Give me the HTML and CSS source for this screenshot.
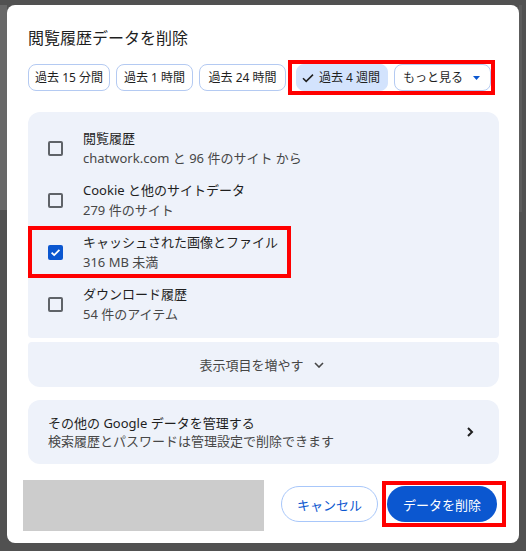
FILE: index.html
```html
<!DOCTYPE html>
<html lang="ja">
<head>
<meta charset="utf-8">
<title>閲覧履歴データを削除</title>
<link rel="stylesheet" href="styles.css">
</head>
<body>
<div class="dialog">
  <h1 class="title">閲覧履歴データを削除</h1>
  <div class="chips">
    <span class="chip chip-w1">過去 15 分間</span>
    <span class="chip chip-w2">過去 1 時間</span>
    <span class="chip chip-w3">過去 24 時間</span>
    <span class="mark-group">
      <span class="chip chip-selected"><svg class="chip-check" width="12" height="10" viewBox="0 0 12 10"><path d="M1 5.2 L4.2 8.4 L11 1.6" fill="none" stroke="#1f1f1f" stroke-width="1.5"/></svg>過去 4 週間</span>
      <span class="chip chip-more">もっと見る<svg class="chip-caret" width="7" height="4" viewBox="0 0 7 4"><path d="M0 0 L7 0 L3.5 4 Z" fill="#0b57d0"/></svg></span>
    </span>
  </div>

  <div class="card card-list">
    <div class="row">
      <span class="box"></span>
      <div class="row-text">
        <div class="label">閲覧履歴</div>
        <div class="sub">chatwork.com と 96 件のサイト から</div>
      </div>
    </div>
    <div class="row">
      <span class="box"></span>
      <div class="row-text">
        <div class="label">Cookie と他のサイトデータ</div>
        <div class="sub">279 件のサイト</div>
      </div>
    </div>
    <div class="row row-marked">
      <span class="box box-checked"><svg width="15" height="15" viewBox="0 0 15 15"><path d="M3.6 7.6 L6.2 10.1 L11.4 4.9" fill="none" stroke="#fff" stroke-width="1.8"/></svg></span>
      <div class="row-text">
        <div class="label">キャッシュされた画像とファイル</div>
        <div class="sub">316 MB 未満</div>
      </div>
    </div>
    <div class="row">
      <span class="box"></span>
      <div class="row-text">
        <div class="label">ダウンロード履歴</div>
        <div class="sub">54 件のアイテム</div>
      </div>
    </div>
  </div>

  <div class="card card-more">
    <span>表示項目を増やす</span>
    <svg width="10" height="6" viewBox="0 0 10 6"><path d="M1 1 L5 5 L9 1" fill="none" stroke="#474747" stroke-width="1.6"/></svg>
  </div>

  <div class="card card-google">
    <div class="google-text">
      <div class="label">その他の Google データを管理する</div>
      <div class="sub">検索履歴とパスワードは管理設定で削除できます</div>
    </div>
    <svg width="8" height="10" viewBox="0 0 8 10"><path d="M2 1 L6 5 L2 9" fill="none" stroke="#1f1f1f" stroke-width="2"/></svg>
  </div>

  <div class="footer">
    <div class="placeholder"></div>
    <button class="btn btn-outline">キャンセル</button>
    <span class="mark-btn"><button class="btn btn-primary">データを削除</button></span>
  </div>
</div>
</body>
</html>
```
FILE: styles.css
```css
* { box-sizing: border-box; }
html, body { margin: 0; height: 100%; }
body {
  background-color: #515151;
  background-image: linear-gradient(#686868, #686868), linear-gradient(#5c5c5c, #5c5c5c);
  background-size: 7px 205px, 3px 207px;
  background-position: 0 5px, 519px 5px;
  background-repeat: no-repeat;
  font-family: "Noto Sans", "Noto Sans CJK JP", sans-serif;
  padding: 5px 0 0 7px;
  overflow: hidden;
}
.dialog {
  width: 512px;
  height: 538px;
  background: #fff;
  border-radius: 8px;
  padding: 21px 20px 0 21px;
  display: flex;
  flex-direction: column;
}
.title {
  margin: 0;
  font-size: 16px;
  font-weight: 400;
  line-height: 24px;
  color: #1f1f1f;
}
.chips {
  display: flex;
  gap: 6px;
  margin-top: 14px;
  height: 27px;
}
.chip {
  display: inline-flex;
  align-items: center;
  justify-content: center;
  height: 27px;
  border: 1px solid #b4caf2;
  border-radius: 8px;
  font-size: 12px;
  line-height: 1;
  color: #1f1f1f;
  white-space: nowrap;
}
.chip-w1 { width: 82px; }
.chip-w2 { width: 77px; }
.chip-w3 { width: 87px; }
.mark-group {
  display: inline-flex;
  gap: 6px;
  padding-left: 4px;
  outline: 4px solid #f00;
}
.chip-selected {
  width: 92px;
  background: #d3e3fd;
  border-color: #d3e3fd;
  justify-content: flex-start;
  padding-left: 5px;
  gap: 5px;
}
.chip-check { flex: none; }
.chip-more {
  width: 97px;
  justify-content: flex-start;
  padding-left: 8px;
  gap: 10px;
}
.chip-caret { flex: none; }

.card {
  background: #eef2fa;
}
.card-list {
  margin-top: 21px;
  border-radius: 12px 12px 4px 4px;
  padding: 10px 0 8px;
}
.row {
  display: flex;
  align-items: center;
  height: 52px;
  width: fit-content;
  padding: 0 13px 0 20px;
  gap: 20px;
}
.row-marked {
  outline: 4px solid #f00;
  outline-offset: -4px;
}
.box {
  flex: none;
  width: 15px;
  height: 15px;
  border: 2px solid #5f6368;
  border-radius: 2px;
}
.box-checked {
  border: none;
  background: #0b57d0;
  display: flex;
}
.label {
  font-size: 13px;
  line-height: 20px;
  color: #1f1f1f;
  white-space: nowrap;
}
.sub {
  font-size: 13px;
  line-height: 20px;
  color: #474747;
  white-space: nowrap;
}
.card-more {
  margin-top: 4px;
  height: 45px;
  border-radius: 4px 4px 12px 12px;
  display: flex;
  align-items: center;
  justify-content: center;
  gap: 10px;
  font-size: 13px;
  color: #474747;
  padding-right: 4px;
}
.card-google {
  margin-top: 13px;
  height: 64px;
  border-radius: 12px;
  display: flex;
  align-items: center;
  justify-content: space-between;
  padding: 0 25px 0 20px;
}
.card-google .label,
.card-google .sub { line-height: 18px; }

.footer {
  display: flex;
  align-items: flex-start;
  margin: 16px -7px 0 -5px;
}
.placeholder {
  width: 241px;
  height: 51px;
  background: #cccccc;
}
.btn {
  height: 36px;
  border-radius: 18px;
  font-family: inherit;
  font-size: 13px;
  padding: 0;
  cursor: pointer;
}
.btn-outline {
  margin: 6px 0 0 17px;
  width: 97px;
  border: 1px solid #a8c7fa;
  background: #fff;
  color: #0b57d0;
}
.mark-btn {
  display: inline-flex;
  margin: 1px 0 0 4px;
  border: 4px solid #f00;
  padding: 1px 5px 1px 1px;
}
.btn-primary {
  width: 110px;
  border: none;
  background: #0b57d0;
  color: #fff;
}
```
